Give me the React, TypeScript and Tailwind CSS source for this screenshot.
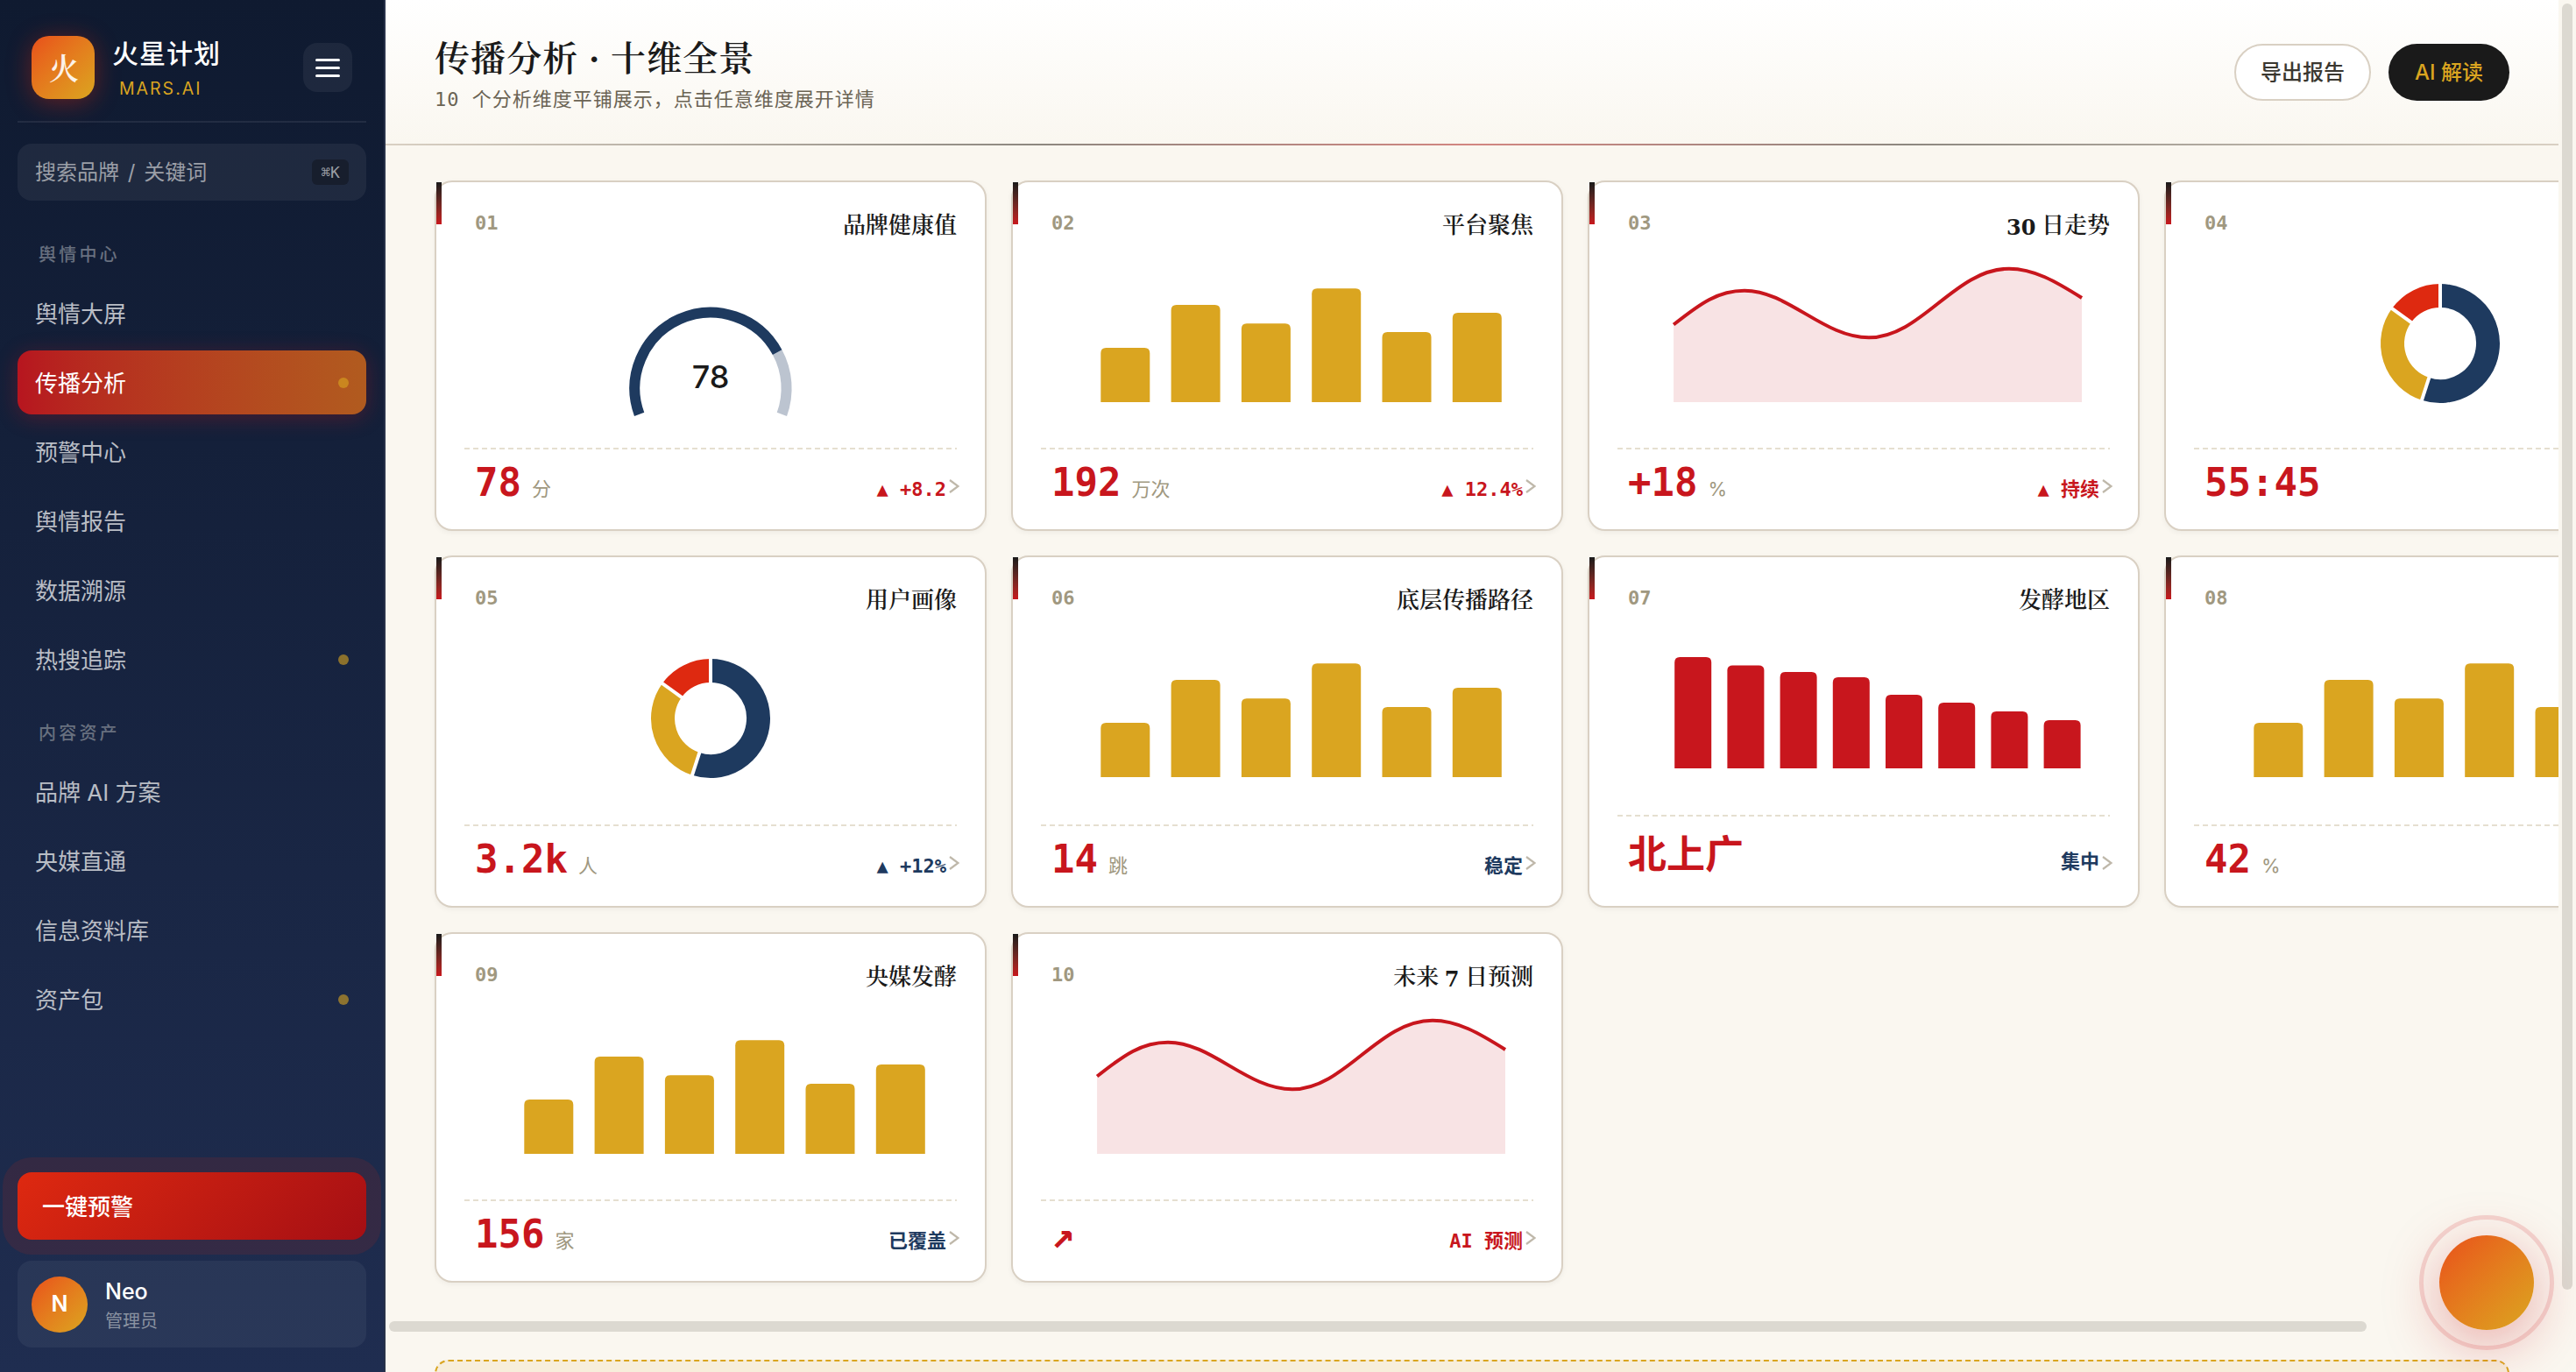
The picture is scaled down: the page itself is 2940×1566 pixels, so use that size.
import { clsx } from 'clsx';

type ChartType = 'gauge' | 'bars' | 'area' | 'donut' | 'regions';

interface Dimension {
  no: string;
  title: string;
  chart: ChartType;
  value: string;
  unit?: string;
  delta?: string;
  tone?: 'red' | 'navy';
}

interface NavItem {
  label: string;
  active?: boolean;
  dot?: boolean;
}

const DIMENSIONS: Dimension[] = [
  { no: '01', title: '品牌健康值', chart: 'gauge', value: '78', unit: '分', delta: '▲ +8.2', tone: 'red' },
  { no: '02', title: '平台聚焦', chart: 'bars', value: '192', unit: '万次', delta: '▲ 12.4%', tone: 'red' },
  { no: '03', title: '30 日走势', chart: 'area', value: '+18', unit: '%', delta: '▲ 持续', tone: 'red' },
  { no: '04', title: '', chart: 'donut', value: '55:45' },
  { no: '05', title: '用户画像', chart: 'donut', value: '3.2k', unit: '人', delta: '▲ +12%', tone: 'navy' },
  { no: '06', title: '底层传播路径', chart: 'bars', value: '14', unit: '跳', delta: '稳定', tone: 'navy' },
  { no: '07', title: '发酵地区', chart: 'regions', value: '北上广', delta: '集中', tone: 'navy' },
  { no: '08', title: '', chart: 'bars', value: '42', unit: '%' },
  { no: '09', title: '央媒发酵', chart: 'bars', value: '156', unit: '家', delta: '已覆盖', tone: 'navy' },
  { no: '10', title: '未来 7 日预测', chart: 'area', value: '↗', delta: 'AI 预测', tone: 'red' },
];

const OPINION_NAV: NavItem[] = [
  { label: '舆情大屏' },
  { label: '传播分析', active: true, dot: true },
  { label: '预警中心' },
  { label: '舆情报告' },
  { label: '数据溯源' },
  { label: '热搜追踪', dot: true },
];

const ASSET_NAV: NavItem[] = [
  { label: '品牌 AI 方案' },
  { label: '央媒直通' },
  { label: '信息资料库' },
  { label: '资产包', dot: true },
];

const MONO = "font-['DejaVu_Sans_Mono','Noto_Sans_CJK_SC',monospace]";
const SERIF = "font-['Liberation_Serif','Noto_Serif_CJK_SC','Noto_Sans_CJK_SC',serif]";

// Bar with rounded top corners and a flat base
function barPath(x: number, base: number, w: number, h: number, r = 6) {
  const top = base - h;
  return `M${x} ${base}V${top + r}Q${x} ${top} ${x + r} ${top}H${x + w - r}Q${x + w} ${top} ${x + w} ${top + r}V${base}Z`;
}

function polar(cx: number, cy: number, r: number, deg: number) {
  const a = ((deg - 90) * Math.PI) / 180;
  return `${(cx + r * Math.cos(a)).toFixed(2)} ${(cy + r * Math.sin(a)).toFixed(2)}`;
}

// Clockwise arc, angles measured from 12 o'clock
function arcPath(cx: number, cy: number, r: number, from: number, to: number) {
  const large = to - from > 180 ? 1 : 0;
  return `M${polar(cx, cy, r, from)}A${r} ${r} 0 ${large} 1 ${polar(cx, cy, r, to)}`;
}

function Gauge() {
  return (
    <>
      <path d={arcPath(281, 163.3, 86.6, 61.6, 110)} fill="none" stroke="#bcc4d0" strokeWidth="12" />
      <path d={arcPath(281, 163.3, 86.6, -110, 61.6)} fill="none" stroke="#1e3a5f" strokeWidth="12" />
      <text x="281" y="163.3" textAnchor="middle" fill="#1a1a1a" className="font-['Inter',sans-serif] text-[36px] font-medium">
        78
      </text>
    </>
  );
}

function Bars() {
  return (
    <>
      {[62, 111, 89.7, 129.7, 80, 102].map((h, i) => (
        <path key={i} d={barPath(68.3 + i * 80.3, 179, 56, h)} fill="#daa520" />
      ))}
    </>
  );
}

function RegionBars() {
  return (
    <>
      {[127, 117.6, 110, 104, 84, 75, 65, 55].map((h, i) => (
        <path key={i} d={barPath(65.2 + i * 60.2, 169, 42, h)} fill="#c8161d" />
      ))}
    </>
  );
}

function Area() {
  const line = 'M64.1 90.5C95 66 115 51.7 145 51.7C195 51.7 235 105.3 287 105.3C347 105.3 385 26.7 447 26.7C475 26.7 500 41 530 60';
  return (
    <>
      <path d={`${line}V179H64.1Z`} fill="#c8161d" fillOpacity="0.12" />
      <path d={line} fill="none" stroke="#c8161d" strokeWidth="4" />
    </>
  );
}

function Donut() {
  return (
    <>
      <path d={arcPath(281, 112, 54.5, 0, 198)} fill="none" stroke="#1e3a5f" strokeWidth="27" />
      <path d={arcPath(281, 112, 54.5, 198, 306)} fill="none" stroke="#daa520" strokeWidth="27" />
      <path d={arcPath(281, 112, 54.5, 306, 360)} fill="none" stroke="#de2910" strokeWidth="27" />
      {[0, 198, 306].map((deg) => (
        <path key={deg} d={`M${polar(281, 112, 38, deg)}L${polar(281, 112, 71, deg)}`} stroke="#fff" strokeWidth="4" />
      ))}
    </>
  );
}

function Chart({ type }: { type: ChartType }) {
  return (
    <svg width="562" height="200" viewBox="0 0 562 200" className="block shrink-0">
      {type === 'gauge' && <Gauge />}
      {type === 'bars' && <Bars />}
      {type === 'regions' && <RegionBars />}
      {type === 'area' && <Area />}
      {type === 'donut' && <Donut />}
    </svg>
  );
}

// Digits in a title get a wider, heavier face than the Chinese text around them
function CardTitle({ text }: { text: string }) {
  return (
    <h3 className={clsx(SERIF, 'mt-0.5 text-[26px] leading-8 font-semibold text-[#1a1a1a]')}>
      {text.split(/(\d+)/).map((part, i) =>
        /\d/.test(part) ? (
          <span key={i} className="relative top-0.5 font-['DejaVu_Serif',serif] text-[24px] leading-none font-bold">
            {part}
          </span>
        ) : (
          part
        )
      )}
    </h3>
  );
}

function DimensionCard({ item }: { item: Dimension }) {
  const tall = item.chart === 'regions';
  return (
    <article className="relative flex flex-col rounded-[20px] border-2 border-[#d9d0c3] bg-white p-8 shadow-[0_2px_6px_rgba(26,26,26,0.05)]">
      <span className="absolute left-0 top-0 h-12 w-1.5 bg-linear-to-b from-[#1a1a1a] to-[#c8161d]" />
      <div className="flex h-10 items-start justify-between pl-3">
        <span className={clsx(MONO, 'mt-px text-[22px] leading-7 font-bold text-[#a09880]')}>{item.no}</span>
        <CardTitle text={item.title} />
      </div>
      <div className="min-h-0 flex-1 overflow-hidden">
        <Chart type={item.chart} />
      </div>
      {/* dashed rule above the figures */}
      <svg width="562" height="2" className="block shrink-0">
        <path d="M0 1H562" stroke="#e5dfd0" strokeWidth="2" strokeDasharray="6 4" />
      </svg>
      <div
        className={clsx(
          MONO,
          'flex shrink-0 items-baseline justify-between px-3 font-bold leading-[44px]',
          tall ? 'h-[70px] pt-[22px]' : 'h-[59px] pt-4'
        )}
      >
        <div className="flex items-baseline gap-3">
          <span className="text-[44px] text-[#c8161d]">{item.value}</span>
          {item.unit && (
            <span className="font-['Inter','Noto_Sans_CJK_SC',sans-serif] text-[22px] font-normal text-[#a09880]">{item.unit}</span>
          )}
        </div>
        {item.delta && (
          <span className={clsx('text-[22px]', item.tone === 'navy' ? 'text-[#1e3a5f]' : 'text-[#c8161d]')}>{item.delta}</span>
        )}
      </div>
      {item.delta && (
        <svg width="12" height="16" viewBox="0 0 12 16" className="absolute bottom-[41px] right-[29px]">
          <path d="M1 1L10.5 8L1 15" fill="none" stroke="#bfb8aa" strokeWidth="2.2" />
        </svg>
      )}
    </article>
  );
}

function NavGroup({ title, items }: { title: string; items: NavItem[] }) {
  return (
    <div>
      <p className="mb-4 pl-6 text-[20px] leading-7 font-medium tracking-[3.2px] text-[#68707f]">{title}</p>
      <div className="flex flex-col gap-1.5">
        {items.map((item) => (
          <a
            key={item.label}
            className={clsx(
              'flex h-[73px] items-center justify-between rounded-2xl px-5 text-[26px]',
              item.active
                ? 'bg-linear-to-r from-[#b7151f] to-[#b15b1f] text-white shadow-[0_4px_24px_rgba(200,22,29,0.3)]'
                : 'text-[#b9bdc5]'
            )}
          >
            <span className="pt-0.5">{item.label}</span>
            {item.dot && <span className="size-3 rounded-full bg-[#daa520]/60" />}
          </a>
        ))}
      </div>
    </div>
  );
}

function Sidebar() {
  return (
    <aside className="flex w-[440px] shrink-0 flex-col border-r-2 border-[#28324a] bg-linear-to-b from-[#0f1a30] to-[#1f2d50] px-5 pb-7">
      <div className="flex h-[140px] items-center border-b-2 border-white/8 px-4 pt-4">
        <div
          className={clsx(
            SERIF,
            'flex size-[72px] items-center justify-center rounded-[20px] bg-linear-to-br from-[#e84e1b] to-[#daa520] pt-1 pl-0.5 text-[34px] font-semibold text-white/90 shadow-[0_4px_28px_rgba(222,41,16,0.4)]'
          )}
        >
          火
        </div>
        <div className="ml-5 flex-1">
          <p className="mt-1 text-[30px] leading-9 font-medium tracking-[1px] text-white">火星计划</p>
          <p className="mt-2 ml-2 text-[19.5px] leading-7 tracking-[2px] text-[#daa520]">MARS.AI</p>
        </div>
        <button className="flex size-14 flex-col items-center justify-center gap-1.5 rounded-2xl bg-white/6">
          <span className="h-[3px] w-7 rounded-full bg-white" />
          <span className="h-[3px] w-7 rounded-full bg-white" />
          <span className="h-[3px] w-7 rounded-full bg-white" />
        </button>
      </div>
      <div className="mt-6 flex h-[65px] items-center justify-between rounded-2xl bg-white/6 px-5 text-[24px] text-[#9b9fa7] [word-spacing:3px]">
        搜索品牌 / 关键词
        <kbd className={clsx(MONO, 'flex h-[29px] w-[42px] items-center justify-center rounded-md bg-[#171e2d] text-[18px] text-[#9a9da3]')}>⌘K</kbd>
      </div>
      <nav className="mt-12 flex flex-1 flex-col gap-[34px]">
        <NavGroup title="舆情中心" items={OPINION_NAV} />
        <NavGroup title="内容资产" items={ASSET_NAV} />
      </nav>
      <button className="h-[77px] rounded-2xl bg-linear-[135deg,#de2910,#a50f14] px-7 pt-0.5 text-left text-[26px] font-medium text-white shadow-[0_0_0_17px_rgba(222,41,16,0.12)]">
        一键预警
      </button>
      <div className="mt-6 flex h-[99px] items-center gap-5 rounded-2xl bg-white/5 px-4">
        <div className="flex size-16 items-center justify-center rounded-full bg-linear-to-br from-[#e84e1b] to-[#daa520] text-[25px] font-semibold text-white">
          N
        </div>
        <div className="pt-0.5">
          <p className="text-[25px] leading-8 font-medium text-white">Neo</p>
          <p className="mt-1 text-[20px] leading-7 text-[#8a92a1]">管理员</p>
        </div>
      </div>
    </aside>
  );
}

function PageHeader() {
  return (
    <header className="relative flex h-[166px] shrink-0 items-center justify-between border-b-2 border-[#d9d0c3] bg-linear-to-b from-white to-[#faf7f0] px-14">
      <div className="pt-1.5">
        <h1 className={clsx(SERIF, 'text-[40px] leading-[52px] font-semibold tracking-[1.1px] text-[#1a1a1a]')}>传播分析 · 十维全景</h1>
        <p className={clsx(MONO, 'mt-[5px] text-[22px] leading-[30px] tracking-[1px] text-[#6b6454]')}>
          10 个分析维度平铺展示，点击任意维度展开详情
        </p>
      </div>
      <div className="flex gap-5 text-[24px] font-medium">
        <button className="h-[65px] w-[156px] rounded-full border-2 border-[#d9d0c3] bg-white pt-0.5 text-[#3a3730]">导出报告</button>
        <button className="h-[65px] w-[138px] rounded-full bg-[#1a1a1a] pt-0.5 text-[#daa520]">AI 解读</button>
      </div>
      <span className="absolute -bottom-0.5 left-0 h-0.5 w-full bg-[linear-gradient(90deg,transparent,#1a1a1a_30%,#c8161d_50%,#1a1a1a_70%,transparent)] opacity-40" />
    </header>
  );
}

export default function App() {
  return (
    <div className="flex h-[1566px] w-[2940px] overflow-hidden bg-[#faf7f0] font-['Inter','Noto_Sans_CJK_SC',sans-serif]">
      <Sidebar />
      <main className="flex w-[2480px] shrink-0 flex-col overflow-hidden">
        <PageHeader />
        <div className="h-[1358px] shrink-0 overflow-hidden pl-14 pt-10">
          <div className="grid w-max grid-cols-[repeat(4,630px)] grid-rows-[400px_402px_400px] gap-7">
            {DIMENSIONS.map((item) => (
              <DimensionCard key={item.no} item={item} />
            ))}
          </div>
          {/* horizontal scroll thumb */}
          <div className="-ml-13 mt-[44px] h-3 w-[2257px] rounded-full bg-[#dcd9d1]" />
        </div>
        <div className="mx-14 mt-7 h-24 shrink-0 rounded-[16px] border-2 border-dashed border-[#daa520] bg-[#f7eedb]" />
      </main>
      <div className="w-5 shrink-0 px-1 pt-1">
        <div className="h-[1468px] w-3 rounded-full bg-[#dcd9d1]" />
      </div>
      <button className="fixed left-[2761px] top-[1387px] flex size-[154px] items-center justify-center rounded-full border-[5px] border-[#c8161d]/15">
        <span className="size-[108px] rounded-full bg-linear-to-br from-[#e84e1b] to-[#daa520] shadow-[0_16px_64px_rgba(200,22,29,0.35)]" />
      </button>
    </div>
  );
}
